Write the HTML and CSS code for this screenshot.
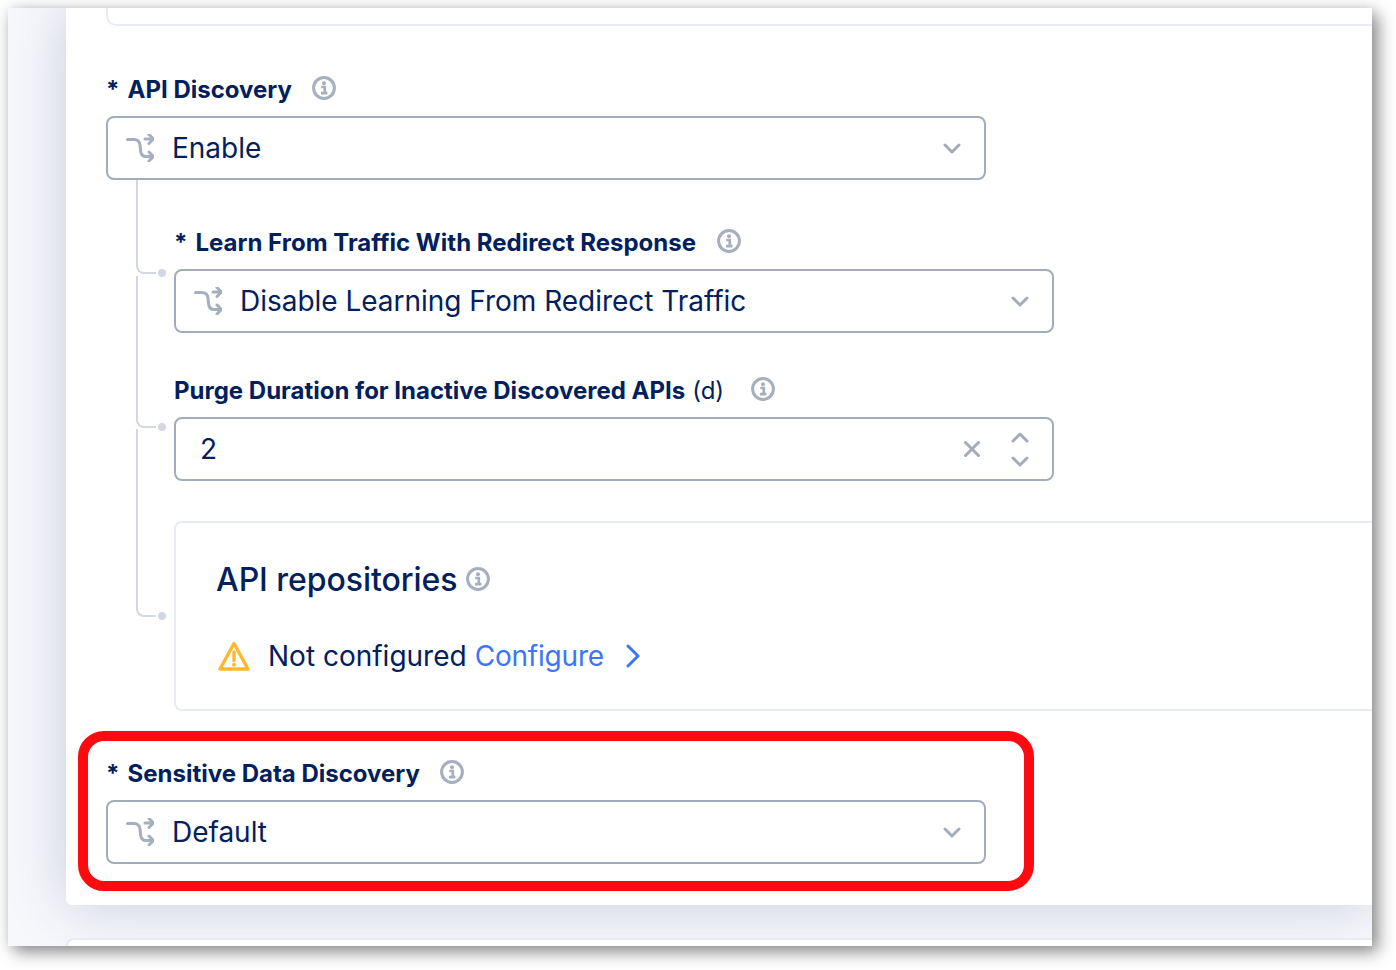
FILE: index.html
```html
<!DOCTYPE html>
<html lang="en">
<head>
<meta charset="utf-8">
<title>API Discovery</title>
<link rel="stylesheet" href="styles.css">
</head>
<body>
<svg class="defs" width="0" height="0" aria-hidden="true">
  <symbol id="route" viewBox="0 0 28 28"><path d="M1.500 5.500H8c3.500 0 5.500 2 6 5.500l.6 6c.3 3.500 2.500 5.500 5.500 5.500h7.400M19 5h8.500M23 .5 27.500 5 23 9.500M23 18l4.500 4.500L23 27" fill="none" stroke="currentColor" stroke-width="3" stroke-linecap="round" stroke-linejoin="round"/></symbol>
  <symbol id="info" viewBox="0 0 24 24"><circle cx="12" cy="12" r="10.400" fill="none" stroke="currentColor" stroke-width="3"/><circle cx="12" cy="7.300" r="2" fill="currentColor"/><path d="M9.300 11h3.500v6M9 17.200h6.400" fill="none" stroke="currentColor" stroke-width="2.700"/></symbol>
  <symbol id="chev" viewBox="0 0 18 11"><path d="M2 2l7 7 7-7" fill="none" stroke="currentColor" stroke-width="3" stroke-linecap="round" stroke-linejoin="round"/></symbol>
</svg>
<div class="window">
  <main class="card">
    <div class="stub"></div>

    <section class="field field-first">
      <div class="label"><span class="req">*</span>API Discovery<svg class="info"><use href="#info"/></svg></div>
      <div class="control wide">
        <svg class="route"><use href="#route"/></svg><span class="value">Enable</span>
        <svg class="chev"><use href="#chev"/></svg>
      </div>
    </section>

    <div class="nested">
      <section class="field item item-a">
        <span class="branch branch-a"></span>
        <div class="label"><span class="req">*</span>Learn From Traffic With Redirect Response<svg class="info info-wide"><use href="#info"/></svg></div>
        <div class="control wide">
          <svg class="route"><use href="#route"/></svg><span class="value">Disable Learning From Redirect Traffic</span>
          <svg class="chev"><use href="#chev"/></svg>
        </div>
      </section>

      <section class="field item item-b">
        <span class="branch branch-b"></span>
        <div class="label">Purge Duration for Inactive Discovered APIs<span class="unit">(d)</span><svg class="info"><use href="#info"/></svg></div>
        <div class="control wide number">
          <span class="value">2</span>
          <svg class="clear" viewBox="0 0 16 16"><path d="M1.500 1.500l13 13M14.500 1.500l-13 13" fill="none" stroke="currentColor" stroke-width="3" stroke-linecap="round"/></svg>
          <div class="stepper">
            <svg class="chev up"><use href="#chev"/></svg>
            <svg class="chev"><use href="#chev"/></svg>
          </div>
        </div>
      </section>

      <section class="repos item">
        <span class="branch branch-c"></span>
        <h2 class="repos-title">API repositories<svg class="info info-sm"><use href="#info"/></svg></h2>
        <div class="status">
          <svg class="warn" viewBox="0 0 32 30"><path d="M16 2.500 2 28h28Z" fill="none" stroke="currentColor" stroke-width="3.400" stroke-linejoin="round"/><path d="M16 11v8.500" stroke="currentColor" stroke-width="3.400" stroke-linecap="round"/><circle cx="16" cy="23.800" r="2" fill="currentColor"/></svg>
          <span class="status-text">Not configured</span>
          <a class="link" href="#">Configure</a>
          <svg class="link-chev" viewBox="0 0 14 24"><path d="M2 2l10 10L2 22" fill="none" stroke="currentColor" stroke-width="3" stroke-linecap="round" stroke-linejoin="round"/></svg>
        </div>
      </section>
    </div>

    <section class="field highlighted">
      <div class="label"><span class="req">*</span>Sensitive Data Discovery<svg class="info"><use href="#info"/></svg></div>
      <div class="control wide">
        <svg class="route"><use href="#route"/></svg><span class="value">Default</span>
        <svg class="chev"><use href="#chev"/></svg>
      </div>
      <span class="callout"></span>
    </section>
  </main>
  <div class="next-card"></div>
</div>
</body>
</html>
```

FILE: styles.css
```css
* { box-sizing: border-box; }

html, body { margin: 0; background: #fff; }

body {
  padding: 8px 24px 24px 8px;
  font-family: Inter, "Liberation Sans", sans-serif;
  color: #02205c;
  height: 970px;
  overflow: hidden;
}

.defs { position: absolute; }

.window {
  height: 938px;
  width: 1364px;
  padding-left: 58px;
  background: #f7f8fc;
  overflow: hidden;
  box-shadow: 6px 6px 16px rgba(0, 0, 0, .45), 0 0 12px rgba(0, 0, 0, .08);
}

.card {
  height: 897px;
  padding-left: 40px;
  background: #fff;
  border-bottom-left-radius: 6px;
  box-shadow: 0 0 60px rgba(40, 50, 90, .22);
  position: relative;
}

.stub {
  height: 18px;
  border: 2px solid #e8eaf6;
  border-top: 0;
  border-right: 0;
  border-bottom-left-radius: 10px;
}

.field { display: flex; flex-direction: column; }
.field-first { margin-top: 50px; }

.label {
  height: 40px;
  display: flex;
  align-items: center;
  font-size: 24px;
  font-weight: 700;
  white-space: nowrap;
  padding-bottom: 14px;
}

.req { width: 21.5px; font-size: 24px; }
.unit { margin: 0 7px 0 7px; font-weight: 400; }

.info { width: 24px; height: 24px; margin: 0 0 2px 20px; color: #a6afbd; flex: none; }
.info-wide { margin-left: 21px; }
.info-sm { margin-left: 9px; }

.control {
  height: 64px;
  display: flex;
  align-items: center;
  border: 2px solid #a2acba;
  border-radius: 8px;
  background: #fff;
  padding: 0 23px 0 18px;
  font-size: 28px;
}

.wide { width: 880px; }

.value { flex: 1; margin-left: 18px; letter-spacing: -.02px; }
.number .value { margin-left: 6px; }

.route { width: 28px; height: 28px; color: #a6afbd; flex: none; }
.chev { width: 18px; height: 11px; color: #a2acba; flex: none; display: block; }

.clear { width: 16px; height: 16px; color: #a2acba; margin-right: 31px; }

.stepper { display: flex; flex-direction: column; gap: 13px; }
.up { transform: rotate(180deg); }

.nested { margin-left: 68px; }

.item { position: relative; }
.item-a { margin-top: 49px; }
.item-b { margin-top: 44px; }

.branch {
  position: absolute;
  left: -38px;
  width: 20px;
  border-left: 2px solid #d3d7e5;
  border-bottom: 2px solid #d3d7e5;
  border-bottom-left-radius: 8px;
}

.branch::after {
  content: "";
  position: absolute;
  right: -10px;
  bottom: -5px;
  width: 8px;
  height: 8px;
  border-radius: 50%;
  background: #d3d7e5;
}

.branch-a { top: -49px; height: 94px; }
.branch-b { top: -101px; height: 152px; }
.branch-c { left: -40px; top: -94px; height: 188px; }

.repos {
  width: 1300px;
  height: 190px;
  margin-top: 40px;
  padding: 35px 0 0 40px;
  border: 2px solid #e8eaf6;
  border-right: 0;
  border-radius: 8px 0 0 8px;
}

.repos-title {
  display: flex;
  align-items: center;
  margin: 0;
  font-size: 32px;
  font-weight: 500;
  line-height: 44px;
  letter-spacing: -.05px;
}

.status {
  display: flex;
  align-items: center;
  margin-top: 34px;
  font-size: 28px;
  line-height: 40px;
}

.warn { width: 32px; height: 30px; color: #ffb82e; margin: 0 18px 0 2px; }
.link { color: #3b76f6; text-decoration: none; margin-left: 8px; letter-spacing: -.2px; }
.link-chev { width: 14px; height: 24px; color: #3b76f6; margin-left: 22px; }

.highlighted { position: relative; margin-top: 49px; }

.callout {
  position: absolute;
  left: -28px;
  top: -29px;
  width: 956px;
  height: 160px;
  border: 10px solid #ff0a10;
  border-radius: 26px;
}

.next-card {
  height: 20px;
  margin-top: 33px;
  background: #fff;
  border: 2px solid #e8eaf6;
  border-right: 0;
  border-bottom: 0;
  border-radius: 8px 0 0 0;
  position: relative;
}
```
